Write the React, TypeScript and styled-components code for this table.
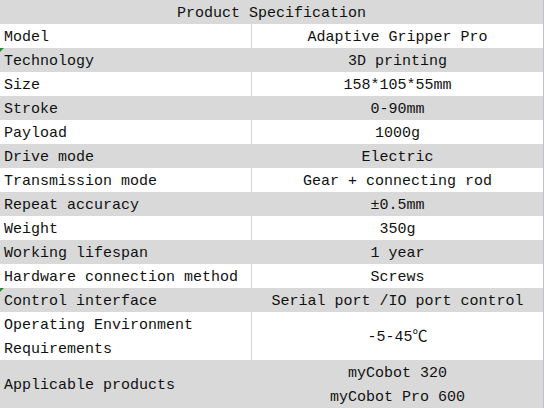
import styled, { createGlobalStyle, css } from "styled-components";

const GlobalStyle = createGlobalStyle`
  html, body {
    margin: 0;
    padding: 0;
    background: #ffffff;
  }
  body {
    font-family: "Liberation Mono", "Noto Sans CJK SC", monospace;
    font-size: 15px;
    color: #111111;
  }
`;

type Spec = {
  label: string[];
  value: string[];
  marker?: boolean;
};

const specs: Spec[] = [
  { label: ["Model"], value: ["Adaptive Gripper Pro"] },
  { label: ["Technology"], value: ["3D printing"], marker: true },
  { label: ["Size"], value: ["158*105*55mm"] },
  { label: ["Stroke"], value: ["0-90mm"] },
  { label: ["Payload"], value: ["1000g"] },
  { label: ["Drive mode"], value: ["Electric"] },
  { label: ["Transmission mode"], value: ["Gear + connecting rod"] },
  { label: ["Repeat accuracy"], value: ["±0.5mm"] },
  { label: ["Weight"], value: ["350g"] },
  { label: ["Working lifespan"], value: ["1 year"] },
  { label: ["Hardware connection method"], value: ["Screws"] },
  { label: ["Control interface"], value: ["Serial port /IO port control"], marker: true },
  { label: ["Operating Environment", "Requirements"], value: ["-5-45℃"] },
  { label: ["Applicable products"], value: ["myCobot 320", "myCobot Pro 600"] },
];

const App = () => {
  return (
    <>
      <GlobalStyle />
      <Sheet>
        <HeaderCell>
          <Line>Product Specification</Line>
        </HeaderCell>
        {specs.map((row, i) => {
          const shaded = i % 2 === 1;
          const lines = Math.max(row.label.length, row.value.length);
          return (
            <Row key={row.label.join(" ")} $shaded={shaded} $lines={lines}>
              <LabelCell $shaded={shaded} $marker={row.marker}>
                {row.label.map((t) => (
                  <Line key={t}>{t}</Line>
                ))}
              </LabelCell>
              <ValueCell>
                {row.value.map((t) => (
                  <Line key={t}>{t}</Line>
                ))}
              </ValueCell>
            </Row>
          );
        })}
      </Sheet>
    </>
  );
};

export default App;

const Sheet = styled.div`
  width: 543px;
  border-right: 1px solid #bcc2d2;
  display: flex;
  flex-direction: column;
`;

const HeaderCell = styled.div`
  height: 24px;
  background: #d9d9d9;
  text-align: center;
  white-space: pre;
`;

const Row = styled.div<{ $shaded: boolean; $lines: number }>`
  display: grid;
  grid-template-columns: 252px 291px;
  height: ${(p) => (p.$lines > 1 ? 48 : 24)}px;
  background: ${(p) => (p.$shaded ? "#d9d9d9" : "#ffffff")};
`;

const LabelCell = styled.div<{ $shaded: boolean; $marker?: boolean }>`
  position: relative;
  display: flex;
  flex-direction: column;
  justify-content: center;
  padding-left: 4px;
  border-right: 1px solid ${(p) => (p.$shaded ? "#d9d9d9" : "#d4d4d4")};
  white-space: pre;
  ${(p) =>
    p.$marker &&
    css`
      &::before {
        content: "";
        position: absolute;
        left: 0;
        top: 0;
        width: 0;
        height: 0;
        border-top: 4px solid #2f8a3a;
        border-right: 4px solid transparent;
      }
    `}
`;

const ValueCell = styled.div`
  display: flex;
  flex-direction: column;
  justify-content: center;
  align-items: center;
  white-space: pre;
`;

const Line = styled.span`
  display: block;
  box-sizing: border-box;
  height: 24px;
  padding-top: 4px;
  line-height: 20px;
`;
